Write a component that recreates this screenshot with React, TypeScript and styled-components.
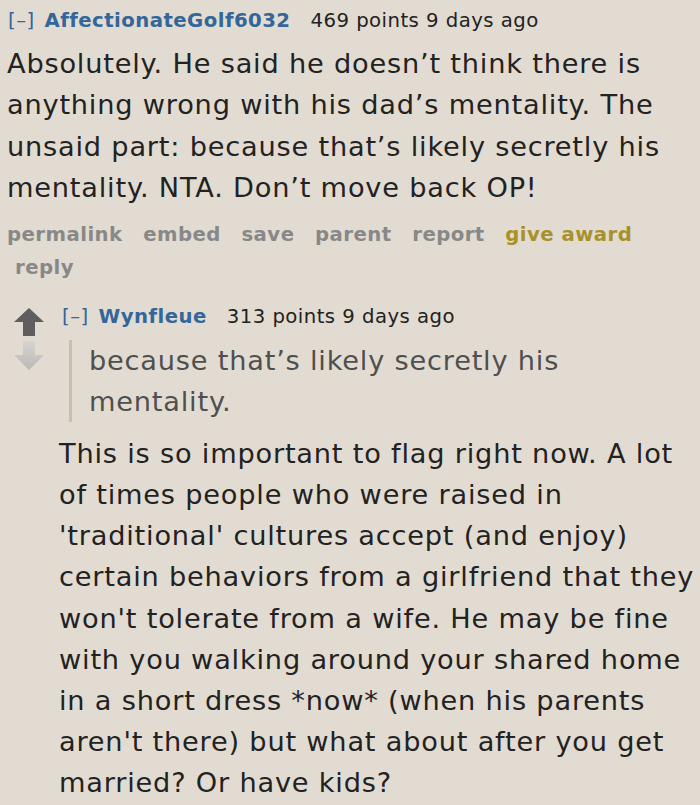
import React from "react";
import styled, { createGlobalStyle } from "styled-components";

const Global = createGlobalStyle`
  html, body { margin: 0; padding: 0; background: #e2dbd1; }
  body { font-family: Verdana, "DejaVu Sans", sans-serif; }
`;

const Page = styled.div`
  width: 700px;
  height: 805px;
  overflow: hidden;
  box-sizing: border-box;
  padding: 5px 0 0 7px;
  background: #e2dbd1;
`;

const Comment = styled.div`
  display: flex;
  flex-direction: column;
`;

const Tagline = styled.div<{ $nested?: boolean }>`
  display: flex;
  align-items: baseline;
  font-size: 19.7px;
  letter-spacing: 0.45px;
  line-height: 32px;
  color: #222;
  padding-left: ${(p) => (p.$nested ? "3px" : "1px")};
`;

const Toggle = styled.span`
  color: #369;
  margin-right: 10px;
`;

const Author = styled.span`
  color: #369;
  font-weight: bold;
  margin-right: 20px;
`;

const Body = styled.div<{ $quote?: boolean }>`
  font-size: 27.2px;
  letter-spacing: 0.8px;
  line-height: 41.15px;
  color: ${(p) => (p.$quote ? "#4f4f4f" : "#222")};
`;

const FirstBody = styled(Body)`
  margin-top: 6px;
  line-height: 41.4px;
`;

const Quote = styled.div`
  border-left: 3px solid #c6c1ae;
  margin: 7px 30px 11px 10px;
  padding-left: 17px;
`;

const Buttons = styled.ul`
  list-style: none;
  margin: 9px 0 0;
  padding: 0;
  display: flex;
  flex-wrap: wrap;
  column-gap: 20.6px;
  font-size: 19.7px;
  letter-spacing: 0.45px;
  line-height: 33px;
  font-weight: bold;
`;

const Button = styled.li<{ $gold?: boolean; $indent?: boolean }>`
  color: ${(p) => (p.$gold ? "#a8912a" : "#888")};
  padding-left: ${(p) => (p.$indent ? "8px" : "0")};
`;

const Child = styled.div`
  display: flex;
  margin-top: 17px;
`;

const Votes = styled.div`
  width: 52px;
  display: flex;
  flex-direction: column;
  align-items: flex-start;
  padding: 7px 0 0 6px;
  gap: 5px;
  box-sizing: border-box;
`;

const ChildEntry = styled.div`
  flex: 1;
  display: flex;
  flex-direction: column;
`;

const Up = () => (
  <svg width="32" height="28" viewBox="0 0 32 28">
    <path d="M16 0 L31 14 L22 14 L22 28 L10 28 L10 14 L1 14 Z" fill="#5e5e5e" />
  </svg>
);

const Down = () => (
  <svg width="32" height="29" viewBox="0 0 32 29">
    <defs>
      <linearGradient id="dg" x1="0" y1="0" x2="0" y2="1">
        <stop offset="0" stopColor="#d6d4d0" />
        <stop offset="1" stopColor="#b9b9b9" />
      </linearGradient>
    </defs>
    <path d="M10 0 L22 0 L22 14 L31 14 L16 29 L1 14 L10 14 Z" fill="url(#dg)" />
  </svg>
);

export default function App() {
  return (
    <>
      <Global />
      <Page>
        <Comment>
          <Tagline>
            <Toggle>[–]</Toggle>
            <Author>AffectionateGolf6032</Author>
            <span>469 points 9 days ago</span>
          </Tagline>
          <FirstBody>
            Absolutely. He said he doesn’t think there is anything wrong with his dad’s mentality. The unsaid
            part: because that’s likely secretly his mentality. NTA. Don’t move back OP!
          </FirstBody>
          <Buttons>
            <Button>permalink</Button>
            <Button>embed</Button>
            <Button>save</Button>
            <Button>parent</Button>
            <Button>report</Button>
            <Button $gold>give award</Button>
            <Button $indent>reply</Button>
          </Buttons>
          <Child>
            <Votes>
              <Up />
              <Down />
            </Votes>
            <ChildEntry>
              <Tagline $nested>
                <Toggle>[–]</Toggle>
                <Author>Wynfleue</Author>
                <span>313 points 9 days ago</span>
              </Tagline>
              <Quote>
                <Body $quote>because that’s likely secretly his mentality.</Body>
              </Quote>
              <Body>
                This is so important to flag right now. A lot of times people who were raised in 'traditional'
                cultures accept (and enjoy) certain behaviors from a girlfriend that they won't tolerate from a
                wife. He may be fine with you walking around your shared home in a short dress *now* (when his
                parents aren't there) but what about after you get married? Or have kids?
              </Body>
            </ChildEntry>
          </Child>
        </Comment>
      </Page>
    </>
  );
}
